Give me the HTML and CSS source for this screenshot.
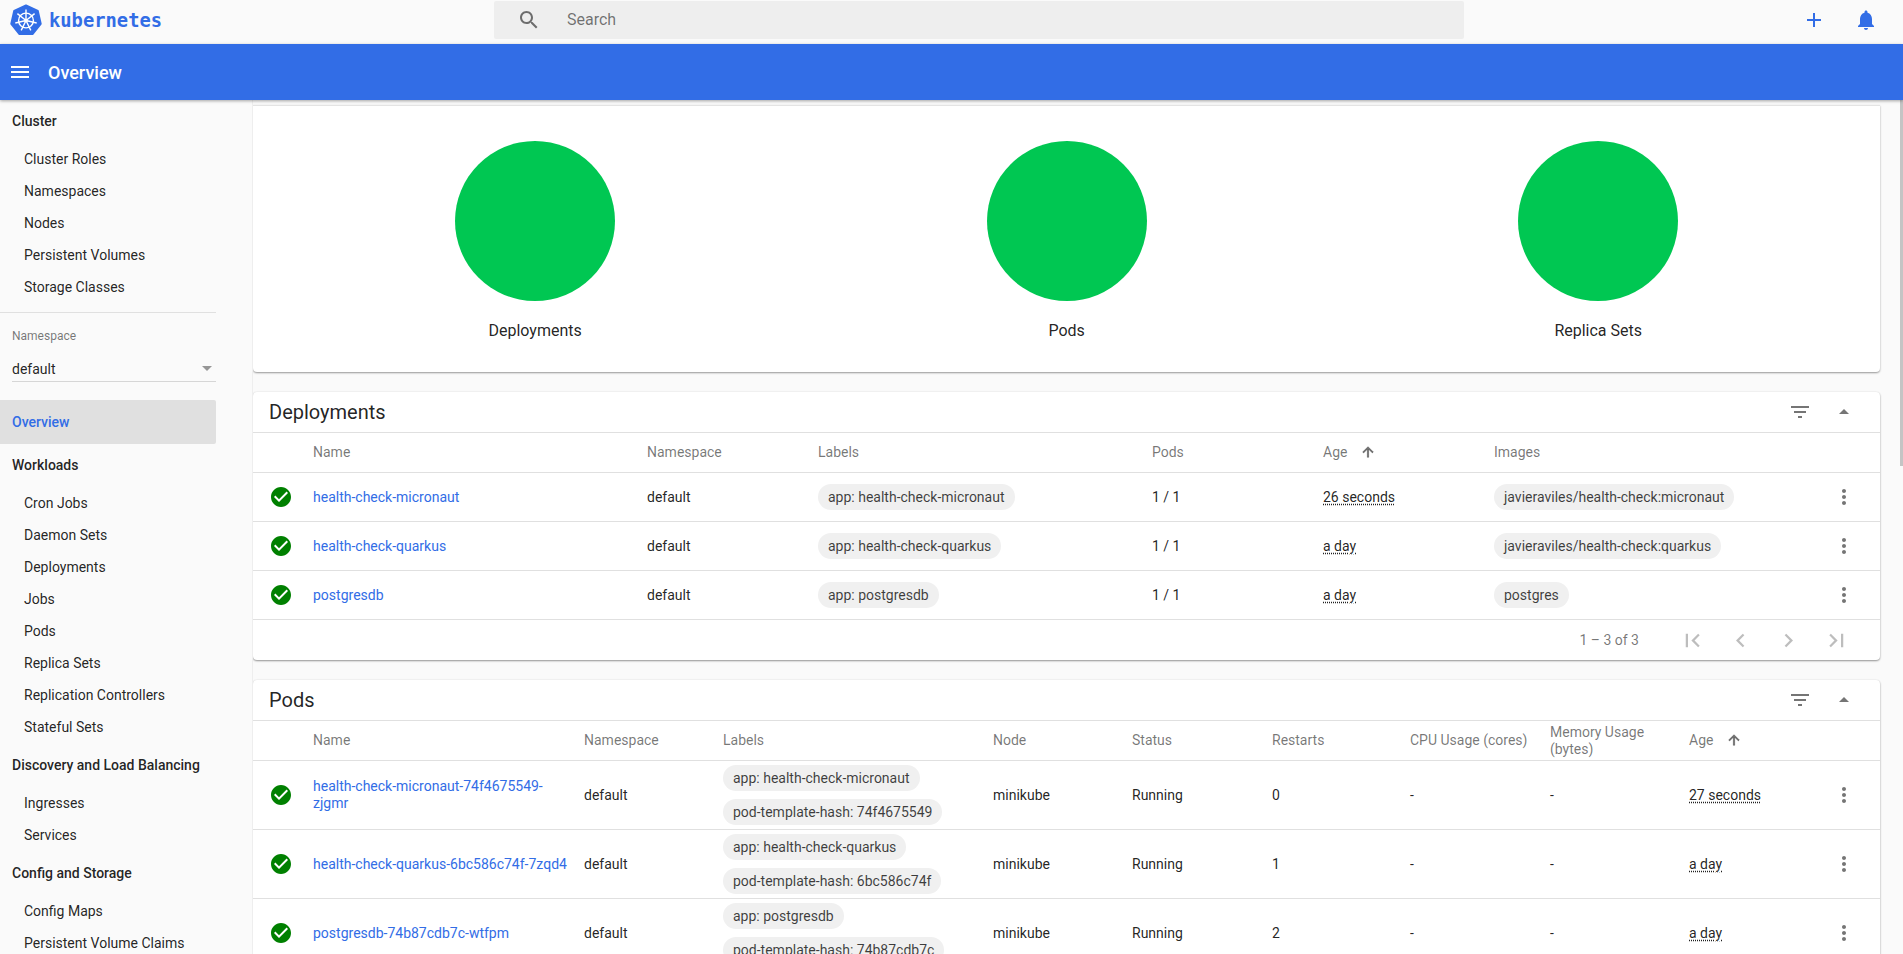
FILE: index.html
```html
<!DOCTYPE html>
<html lang="en">
<head>
<meta charset="utf-8">
<title>Overview - Kubernetes Dashboard</title>
<link rel="stylesheet" href="styles.css">
</head>
<body>
<header class="topbar">
  <div class="brand">
    <svg class="brand-logo" viewBox="0 0 32 32" width="32" height="32">
      <polygon class="hept" points="16,1.4 27.8,7 30.7,19.8 22.5,30 9.5,30 1.3,19.8 4.2,7"/>
      <g class="wheel">
        <circle cx="16" cy="16.5" r="7.4"/>
        <circle class="hub" cx="16" cy="16.5" r="1.7"/>
        <path d="M16 16.5V5.5M16 16.5L24.6 9.6M16 16.5L26.7 19M16 16.5L20.8 26.4M16 16.5L11.2 26.4M16 16.5L5.3 19M16 16.5L7.4 9.6"/>
      </g>
    </svg>
    <span class="brand-name">kubernetes</span>
  </div>
  <div class="search">
    <svg class="icon search-icon" viewBox="0 0 24 24"><path d="M15.5 14h-.79l-.28-.27C15.41 12.59 16 11.11 16 9.5 16 5.91 13.09 3 9.5 3S3 5.91 3 9.5 5.91 16 9.5 16c1.61 0 3.09-.59 4.23-1.57l.27.28v.79l5 4.99L20.49 19l-4.99-5zm-6 0C7.01 14 5 11.99 5 9.5S7.01 5 9.5 5 14 7.01 14 9.5 11.99 14 9.5 14z"/></svg>
    <span class="search-text">Search</span>
  </div>
  <div class="top-actions">
    <svg class="icon blue" viewBox="0 0 24 24"><path d="M19 13h-6v6h-2v-6H5v-2h6V5h2v6h6v2z"/></svg>
    <svg class="icon blue" viewBox="0 0 24 24"><path d="M12 22c1.1 0 2-.9 2-2h-4c0 1.1.9 2 2 2zm6-6v-5c0-3.07-1.64-5.64-4.5-6.32V4c0-.83-.67-1.5-1.5-1.5s-1.5.67-1.5 1.5v.68C7.63 5.36 6 7.92 6 11v5l-2 2v1h16v-1l-2-2z"/></svg>
  </div>
</header>
<div class="toolbar">
  <svg class="icon white" viewBox="0 0 24 24"><path d="M3 18h18v-2H3v2zm0-5h18v-2H3v2zm0-7v2h18V6H3z"/></svg>
  <span class="toolbar-title">Overview</span>
</div>
<div class="layout">
  <aside class="sidebar">
    <div class="nav-head">Cluster</div>
    <div class="nav-item">Cluster Roles</div>
    <div class="nav-item">Namespaces</div>
    <div class="nav-item">Nodes</div>
    <div class="nav-item">Persistent Volumes</div>
    <div class="nav-item">Storage Classes</div>
    <div class="nav-divider"></div>
    <div class="ns-label">Namespace</div>
    <div class="ns-select"><span>default</span><span class="ns-caret"></span></div>
    <div class="nav-active">Overview</div>
    <div class="nav-head">Workloads</div>
    <div class="nav-item">Cron Jobs</div>
    <div class="nav-item">Daemon Sets</div>
    <div class="nav-item">Deployments</div>
    <div class="nav-item">Jobs</div>
    <div class="nav-item">Pods</div>
    <div class="nav-item">Replica Sets</div>
    <div class="nav-item">Replication Controllers</div>
    <div class="nav-item">Stateful Sets</div>
    <div class="nav-head">Discovery and Load Balancing</div>
    <div class="nav-item">Ingresses</div>
    <div class="nav-item">Services</div>
    <div class="nav-head">Config and Storage</div>
    <div class="nav-item">Config Maps</div>
    <div class="nav-item">Persistent Volume Claims</div>
  </aside>
  <main class="content">
    <section class="card status-card">
      <div class="status-col"><div class="dot"></div><div class="status-label">Deployments</div></div>
      <div class="status-col"><div class="dot"></div><div class="status-label">Pods</div></div>
      <div class="status-col"><div class="dot"></div><div class="status-label">Replica Sets</div></div>
    </section>

    <section class="card">
      <div class="card-head">
        <h2 class="card-title">Deployments</h2>
        <svg class="icon grey" viewBox="0 0 24 24"><path d="M10 18h4v-2h-4v2zM3 6v2h18V6H3zm3 7h12v-2H6v2z"/></svg>
        <svg class="icon grey" viewBox="0 0 24 24"><path d="M7 14l5-5 5 5z"/></svg>
      </div>
      <table class="grid deployments">
        <colgroup><col class="c60"><col class="c334"><col class="c171"><col class="c334"><col class="c171"><col class="c171"><col class="c314"><col class="c72"></colgroup>
        <thead><tr><th></th><th>Name</th><th>Namespace</th><th>Labels</th><th>Pods</th><th><span class="sort">Age<svg class="sort-icon" viewBox="0 0 24 24"><path d="M4 12l1.41 1.41L11 7.83V20h2V7.83l5.58 5.59L20 12l-8-8-8 8z"/></svg></span></th><th>Images</th><th></th></tr></thead>
        <tbody>
          <tr>
            <td class="ok"><svg class="icon check" viewBox="0 0 24 24"><path d="M12 2C6.48 2 2 6.48 2 12s4.48 10 10 10 10-4.48 10-10S17.52 2 12 2zm-2 15l-5-5 1.41-1.41L10 14.17l7.59-7.59L19 8l-9 9z"/></svg></td>
            <td><a class="link">health-check-micronaut</a></td><td>default</td>
            <td><div class="chips"><span class="chip">app: health-check-micronaut</span></div></td>
            <td>1 / 1</td><td><span class="age">26 seconds</span></td>
            <td><div class="chips"><span class="chip">javieraviles/health-check:micronaut</span></div></td>
            <td class="more"><svg class="icon grey" viewBox="0 0 24 24"><path d="M12 8c1.1 0 2-.9 2-2s-.9-2-2-2-2 .9-2 2 .9 2 2 2zm0 2c-1.1 0-2 .9-2 2s.9 2 2 2 2-.9 2-2-.9-2-2-2zm0 6c-1.1 0-2 .9-2 2s.9 2 2 2 2-.9 2-2-.9-2-2-2z"/></svg></td>
          </tr>
          <tr>
            <td class="ok"><svg class="icon check" viewBox="0 0 24 24"><path d="M12 2C6.48 2 2 6.48 2 12s4.48 10 10 10 10-4.48 10-10S17.52 2 12 2zm-2 15l-5-5 1.41-1.41L10 14.17l7.59-7.59L19 8l-9 9z"/></svg></td>
            <td><a class="link">health-check-quarkus</a></td><td>default</td>
            <td><div class="chips"><span class="chip">app: health-check-quarkus</span></div></td>
            <td>1 / 1</td><td><span class="age">a day</span></td>
            <td><div class="chips"><span class="chip">javieraviles/health-check:quarkus</span></div></td>
            <td class="more"><svg class="icon grey" viewBox="0 0 24 24"><path d="M12 8c1.1 0 2-.9 2-2s-.9-2-2-2-2 .9-2 2 .9 2 2 2zm0 2c-1.1 0-2 .9-2 2s.9 2 2 2 2-.9 2-2-.9-2-2-2zm0 6c-1.1 0-2 .9-2 2s.9 2 2 2 2-.9 2-2-.9-2-2-2z"/></svg></td>
          </tr>
          <tr>
            <td class="ok"><svg class="icon check" viewBox="0 0 24 24"><path d="M12 2C6.48 2 2 6.48 2 12s4.48 10 10 10 10-4.48 10-10S17.52 2 12 2zm-2 15l-5-5 1.41-1.41L10 14.17l7.59-7.59L19 8l-9 9z"/></svg></td>
            <td><a class="link">postgresdb</a></td><td>default</td>
            <td><div class="chips"><span class="chip">app: postgresdb</span></div></td>
            <td>1 / 1</td><td><span class="age">a day</span></td>
            <td><div class="chips"><span class="chip">postgres</span></div></td>
            <td class="more"><svg class="icon grey" viewBox="0 0 24 24"><path d="M12 8c1.1 0 2-.9 2-2s-.9-2-2-2-2 .9-2 2 .9 2 2 2zm0 2c-1.1 0-2 .9-2 2s.9 2 2 2 2-.9 2-2-.9-2-2-2zm0 6c-1.1 0-2 .9-2 2s.9 2 2 2 2-.9 2-2-.9-2-2-2z"/></svg></td>
          </tr>
        </tbody>
      </table>
      <div class="pager">
        <span class="pager-range">1 – 3 of 3</span>
        <svg class="icon page-icon faint" viewBox="0 0 24 24"><path d="M18.41 16.59L13.82 12l4.59-4.59L17 6l-6 6 6 6zM6 6h2v12H6z"/></svg>
        <svg class="icon page-icon faint" viewBox="0 0 24 24"><path d="M15.41 7.41L14 6l-6 6 6 6 1.41-1.41L10.83 12z"/></svg>
        <svg class="icon page-icon faint" viewBox="0 0 24 24"><path d="M10 6L8.59 7.41 13.17 12l-4.58 4.59L10 18l6-6z"/></svg>
        <svg class="icon page-icon faint" viewBox="0 0 24 24"><path d="M5.59 7.41L10.18 12l-4.59 4.59L7 18l6-6-6-6zM16 6h2v12h-2z"/></svg>
      </div>
    </section>

    <section class="card">
      <div class="card-head">
        <h2 class="card-title">Pods</h2>
        <svg class="icon grey" viewBox="0 0 24 24"><path d="M10 18h4v-2h-4v2zM3 6v2h18V6H3zm3 7h12v-2H6v2z"/></svg>
        <svg class="icon grey" viewBox="0 0 24 24"><path d="M7 14l5-5 5 5z"/></svg>
      </div>
      <table class="grid pods">
        <colgroup><col class="c60"><col class="c271"><col class="c139"><col class="c270"><col class="c139"><col class="c140"><col class="c138"><col class="c140"><col class="c139"><col class="c119"><col class="c72"></colgroup>
        <thead><tr><th></th><th>Name</th><th>Namespace</th><th>Labels</th><th>Node</th><th>Status</th><th>Restarts</th><th>CPU Usage (cores)</th><th>Memory Usage (bytes)</th><th><span class="sort">Age<svg class="sort-icon" viewBox="0 0 24 24"><path d="M4 12l1.41 1.41L11 7.83V20h2V7.83l5.58 5.59L20 12l-8-8-8 8z"/></svg></span></th><th></th></tr></thead>
        <tbody>
          <tr>
            <td class="ok"><svg class="icon check" viewBox="0 0 24 24"><path d="M12 2C6.48 2 2 6.48 2 12s4.48 10 10 10 10-4.48 10-10S17.52 2 12 2zm-2 15l-5-5 1.41-1.41L10 14.17l7.59-7.59L19 8l-9 9z"/></svg></td>
            <td><a class="link">health-check-micronaut-74f4675549-zjgmr</a></td><td>default</td>
            <td><div class="chips"><span class="chip">app: health-check-micronaut</span><span class="chip">pod-template-hash: 74f4675549</span></div></td>
            <td>minikube</td><td>Running</td><td>0</td><td>-</td><td>-</td><td><span class="age">27 seconds</span></td>
            <td class="more"><svg class="icon grey" viewBox="0 0 24 24"><path d="M12 8c1.1 0 2-.9 2-2s-.9-2-2-2-2 .9-2 2 .9 2 2 2zm0 2c-1.1 0-2 .9-2 2s.9 2 2 2 2-.9 2-2-.9-2-2-2zm0 6c-1.1 0-2 .9-2 2s.9 2 2 2 2-.9 2-2-.9-2-2-2z"/></svg></td>
          </tr>
          <tr>
            <td class="ok"><svg class="icon check" viewBox="0 0 24 24"><path d="M12 2C6.48 2 2 6.48 2 12s4.48 10 10 10 10-4.48 10-10S17.52 2 12 2zm-2 15l-5-5 1.41-1.41L10 14.17l7.59-7.59L19 8l-9 9z"/></svg></td>
            <td><a class="link">health-check-quarkus-6bc586c74f-7zqd4</a></td><td>default</td>
            <td><div class="chips"><span class="chip">app: health-check-quarkus</span><span class="chip">pod-template-hash: 6bc586c74f</span></div></td>
            <td>minikube</td><td>Running</td><td>1</td><td>-</td><td>-</td><td><span class="age">a day</span></td>
            <td class="more"><svg class="icon grey" viewBox="0 0 24 24"><path d="M12 8c1.1 0 2-.9 2-2s-.9-2-2-2-2 .9-2 2 .9 2 2 2zm0 2c-1.1 0-2 .9-2 2s.9 2 2 2 2-.9 2-2-.9-2-2-2zm0 6c-1.1 0-2 .9-2 2s.9 2 2 2 2-.9 2-2-.9-2-2-2z"/></svg></td>
          </tr>
          <tr>
            <td class="ok"><svg class="icon check" viewBox="0 0 24 24"><path d="M12 2C6.48 2 2 6.48 2 12s4.48 10 10 10 10-4.48 10-10S17.52 2 12 2zm-2 15l-5-5 1.41-1.41L10 14.17l7.59-7.59L19 8l-9 9z"/></svg></td>
            <td><a class="link">postgresdb-74b87cdb7c-wtfpm</a></td><td>default</td>
            <td><div class="chips"><span class="chip">app: postgresdb</span><span class="chip">pod-template-hash: 74b87cdb7c</span></div></td>
            <td>minikube</td><td>Running</td><td>2</td><td>-</td><td>-</td><td><span class="age">a day</span></td>
            <td class="more"><svg class="icon grey" viewBox="0 0 24 24"><path d="M12 8c1.1 0 2-.9 2-2s-.9-2-2-2-2 .9-2 2 .9 2 2 2zm0 2c-1.1 0-2 .9-2 2s.9 2 2 2 2-.9 2-2-.9-2-2-2zm0 6c-1.1 0-2 .9-2 2s.9 2 2 2 2-.9 2-2-.9-2-2-2z"/></svg></td>
          </tr>
        </tbody>
      </table>
    </section>
    <div class="scroll-thumb"></div>
  </main>
</div>
</body>
</html>
```
FILE: styles.css
```css
* { box-sizing: border-box; }
html, body { margin: 0; height: 100%; overflow: hidden; }
body {
  display: flex;
  flex-direction: column;
  font-family: Roboto, "Liberation Sans", sans-serif;
  font-size: 14px;
  color: rgba(0, 0, 0, .87);
  background: #fafafa;
}
.icon { width: 24px; height: 24px; flex: none; display: block; fill: currentColor; }
.blue { color: #326de6; }
.white { color: #fff; }
.grey { color: rgba(0, 0, 0, .54); }
.faint { color: rgba(0, 0, 0, .26); }
.check { color: #008000; }

.topbar { height: 44px; flex: none; display: flex; background: #fafafa; position: relative; }
.brand { width: 494px; flex: none; display: flex; align-items: flex-start; padding: 4px 0 0 10px; }
.brand-logo { display: block; }
.hept { fill: #326de6; stroke: #326de6; stroke-width: 2; stroke-linejoin: round; }
.wheel { fill: none; stroke: #fff; stroke-width: 1.4; }
.wheel .hub { fill: #fff; stroke: none; }
.brand-name {
  font-family: "DejaVu Sans Mono", monospace;
  font-weight: 700;
  font-size: 18.8px;
  line-height: 24px;
  margin: 5px 0 0 7px;
  color: #326de6;
}
.search {
  width: 970px;
  height: 38px;
  margin-top: 1px;
  flex: none;
  display: flex;
  align-items: center;
  background: #eee;
  border-radius: 2px;
  padding-left: 23px;
  color: rgba(0, 0, 0, .54);
}
.search-icon { color: rgba(0, 0, 0, .54); }
.search-text { font-size: 16px; margin: 0 0 2px 26px; }
.top-actions { flex: 1; display: flex; gap: 28px; align-items: center; justify-content: flex-end; padding: 0 25px 4px 0; }

.toolbar {
  height: 56px;
  flex: none;
  display: flex;
  align-items: center;
  padding-left: 8px;
  background: #326de6;
  color: #fff;
  box-shadow: 0 1px 3px rgba(0, 0, 0, .35);
  position: relative;
  z-index: 2;
}
.toolbar-title { font-size: 18px; font-weight: 500; margin-left: 16px; }

.layout { flex: 1; display: flex; min-height: 0; }
.sidebar { width: 253px; flex: none; overflow: hidden; margin-top: -1px; background: #fafafa; border-right: 1px solid #eee; color: rgba(0, 0, 0, .87); }
.nav-head { height: 44px; display: flex; align-items: center; padding-left: 12px; font-weight: 500; width: 216px; white-space: nowrap; }
.nav-item { height: 32px; display: flex; align-items: center; padding-left: 24px; }
.nav-divider { width: 216px; height: 1px; margin-top: 9px; background: #e0e0e0; }
.ns-label { font-size: 12px; color: rgba(0, 0, 0, .54); margin: 16px 0 0 12px; line-height: 14px; }
.ns-select {
  width: 204px;
  height: 30px;
  margin: 9px 0 0 12px;
  display: flex;
  align-items: center;
  justify-content: space-between;
  padding-top: 4px;
  border-bottom: 1px solid #d6d6d6;
}
.ns-caret { width: 0; height: 0; margin-right: 4px; border: 5px solid transparent; border-top-color: rgba(0, 0, 0, .4); border-bottom: 0; }
.nav-active {
  width: 216px;
  height: 44px;
  margin: 18px 0 -1px;
  display: flex;
  align-items: center;
  padding-left: 12px;
  background: #e0e0e0;
  border-radius: 0 2px 2px 0;
  color: #326de6;
  font-weight: 500;
}

.content { flex: 1; min-width: 0; overflow: hidden; padding: 5px 23px 0 0; position: relative; }
.card {
  background: #fff;
  border-radius: 4px;
  margin-bottom: 20px;
  box-shadow: 0 1px 2px rgba(0, 0, 0, .4), 0 0 2px rgba(0, 0, 0, .08);
}
.status-card {
  display: grid;
  grid-template-columns: repeat(3, 1fr);
  height: 267px;
  padding: 0 16px 0 16.3px;
  border-top: 1px solid #e4e4e4;
  border-radius: 0 0 4px 4px;
  box-shadow: 0 1px 2px rgba(0, 0, 0, .4);
}
.status-col { display: flex; flex-direction: column; align-items: center; padding-top: 35px; }
.dot { width: 160px; height: 160px; border-radius: 50%; background: #00c752; }
.status-label { font-size: 16px; line-height: 20px; margin-top: 20px; }

.card-head { height: 40px; display: flex; align-items: center; padding: 0 24px 0 16px; gap: 20px; }
.card-title { flex: 1; margin: 0; font-size: 20px; font-weight: 400; line-height: 40px; }

.grid { width: 100%; table-layout: fixed; border-collapse: collapse; }
.c60 { width: 60px; }
.c72 { width: 72px; }
.c119 { width: 119px; }
.c138 { width: 138px; }
.c139 { width: 139px; }
.c140 { width: 140px; }
.c171 { width: 171px; }
.c270 { width: 270px; }
.c271 { width: 271px; }
.c314 { width: 314px; }
.c334 { width: 334px; }
.grid th {
  height: 40px;
  padding: 0 8px 0 0;
  text-align: left;
  font-weight: 400;
  line-height: 17px;
  color: rgba(0, 0, 0, .54);
  border-top: 1px solid #e0e0e0;
  border-bottom: 1px solid #e0e0e0;
}
.grid td { height: 49px; padding: 0 8px 0 0; border-bottom: 1px solid #e0e0e0; line-height: 17px; }
.ok .icon { margin-left: 16px; }
.grid .more { padding: 0; }
.more .icon { margin: 0 auto; }
.sort { display: flex; align-items: center; gap: 13px; }
.sort-icon { width: 16px; height: 16px; margin-bottom: 2px; fill: currentColor; stroke: currentColor; stroke-width: .8; }
.link { color: #326de6; }
.age { text-decoration: underline dotted; text-underline-offset: 2px; }
.chips { display: flex; flex-direction: column; align-items: flex-start; gap: 8px; padding: 4px 0; }
.chip { height: 26px; line-height: 26px; padding: 0 10px; border-radius: 13px; background: #f0f0f0; color: rgba(0, 0, 0, .75); white-space: nowrap; }

.pager { height: 40px; display: flex; align-items: center; justify-content: flex-end; gap: 21px; padding-right: 30px; color: rgba(0, 0, 0, .54); }
.pager-range { margin-right: 19px; }
.page-icon { width: 27px; height: 27px; }

.scroll-thumb { position: absolute; top: 0; right: 0; width: 3px; height: 366px; background: #c4c4c4; }
```
